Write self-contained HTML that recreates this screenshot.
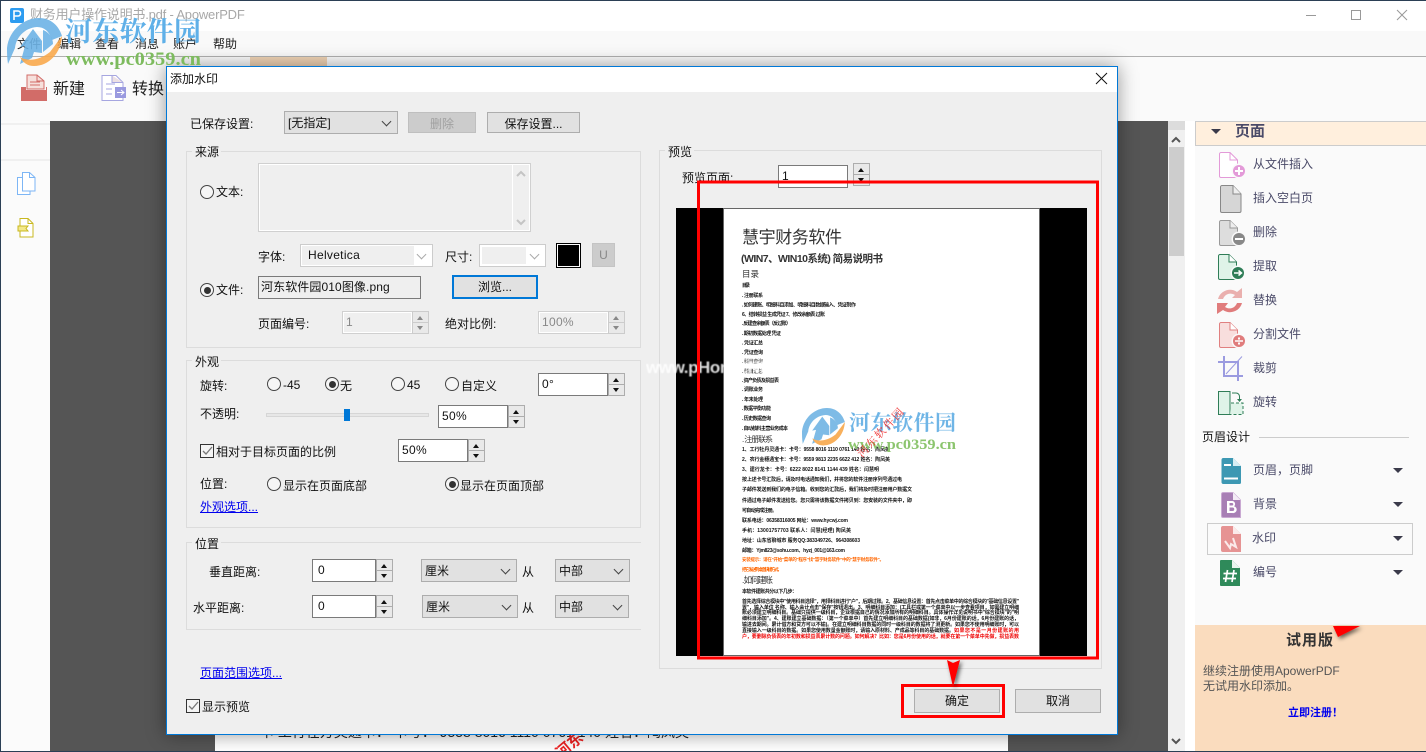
<!DOCTYPE html>
<html lang="zh-CN"><head><meta charset="utf-8"><title>ApowerPDF</title>
<style>
html,body{margin:0;padding:0}
body{width:1426px;height:752px;position:relative;overflow:hidden;background:#fafafa;font:12px/14px "Liberation Sans","WenQuanYi Zen Hei","Noto Sans CJK SC",sans-serif;color:#111}
div,span,a,svg{position:absolute}
.t{white-space:nowrap;height:14px;margin-top:1px}
.m{color:#222}
.s{color:#4a4a68}
.b{background:#e1e1e1;border:1px solid #adadad;box-sizing:border-box;text-align:center}
.g{border:1px solid #dcdcdc;box-sizing:border-box}
.l{background:#efefef;padding:0 2px 0 3px;height:14px;white-space:nowrap}
.i{background:#fff;border:1px solid #7a7a7a;box-sizing:border-box;padding:3px 0 0 3px;font-size:12px;height:23px;width:70px;letter-spacing:.3px}
.d{background:#efefef;border:1px solid #d0d0d0;border-right:0;box-shadow:inset 0 0 0 1px #fff;color:#888}
.sp{background:#e9e9e9;border:1px solid #adadad;box-sizing:border-box;width:17px;height:23px}
.sp:before,.sp:after{content:"";position:absolute;left:4px;border-left:3.5px solid transparent;border-right:3.5px solid transparent}
.sp:before{top:4px;border-bottom:4px solid #111}
.sp:after{bottom:3px;border-top:4px solid #111}
.sp i{position:absolute;left:0;right:0;top:10px;height:1px;background:#adadad}
.sd{border-color:#ccc}.sd:before{border-bottom-color:#888}.sd:after{border-top-color:#888}
.c{background:#e1e1e1;border:1px solid #adadad;box-sizing:border-box;height:23px;padding:4px 0 0 3px}
.c:after{content:"";position:absolute;right:7px;top:6px;width:6px;height:6px;border-right:1px solid #444;border-bottom:1px solid #444;transform:rotate(45deg)}
.cd{background:#fff;border-color:#ccc}.cd:after{border-color:#aaa}
.r{width:14px;height:14px;box-sizing:border-box;border:1px solid #444;border-radius:50%;background:#f6f6f6}
.on:after{content:"";position:absolute;left:2.5px;top:2.5px;width:7px;height:7px;border-radius:50%;background:#333}
.k{width:14px;height:14px;box-sizing:border-box;border:1px solid #333;background:#f4f4f4}
a.t{color:#0000ee;text-decoration:underline}
.ar{width:0;height:0;border-left:5px solid transparent;border-right:5px solid transparent;border-top:5px solid #3a3a4a}
</style></head><body>

<!-- window -->
<div style="left:0;top:0;width:1426px;height:31px;background:#fff"></div>
<div style="left:0;top:31px;width:1426px;height:25px;background:#f9f9f9"></div>
<div style="left:0;top:56px;width:1426px;height:1px;background:#b0b0b0"></div>
<div style="left:250px;top:57px;width:77px;height:9px;background:#f0d3b4"></div>
<div style="left:0;top:121px;width:50px;height:631px;background:#fbfbfb"></div>
<div style="left:0;top:123px;width:50px;height:2px;background:#f0f0f0"></div>
<div style="left:0;top:159px;width:50px;height:2px;background:#f0f0f0"></div>
<div style="left:50px;top:121px;width:1118px;height:631px;background:#555"></div>
<div style="left:1168px;top:121px;width:17px;height:631px;background:#f0f0f0"></div>
<div style="left:1168px;top:121px;width:17px;height:9px;background:#dcdcdc"></div>
<div style="left:1169px;top:147px;width:15px;height:109px;background:#cdcdcd"></div>
<div style="left:1185px;top:121px;width:10px;height:631px;background:#fff"></div>
<div style="left:1195px;top:121px;width:231px;height:504px;background:#fafafa"></div>
<div style="left:1195px;top:121px;width:231px;height:25px;box-sizing:border-box;background:#ffefdd;border:1px solid #ccc;border-right:0"></div>
<div style="left:1195px;top:625px;width:231px;height:127px;background:#fadcbe"></div>
<!-- bottom page peek -->
<div style="left:215px;top:700px;width:793px;height:52px;background:#fff;overflow:hidden">
  <div class="t" style="left:45px;top:23px;font-size:14px;line-height:16px;height:16px;color:#222">卡 工行在方灵通卡： 卡号： 9558 8016 1110 0761 140 姓名：陶凤英</div>
  <div class="t" style="left:340px;top:38px;font-size:15px;color:#e22;transform:rotate(-40deg);font-weight:bold">河东</div>
</div>

<div class="t" style="left:30px;top:7px;font-size:13px;color:#a8a8a8;letter-spacing:-.2px">财务用户操作说明书.pdf - ApowerPDF</div>
<div class="t m" style="left:17px;top:36px">文件</div>
<div class="t m" style="left:57px;top:36px">编辑</div>
<div class="t m" style="left:95px;top:36px">查看</div>
<div class="t m" style="left:135px;top:36px">消息</div>
<div class="t m" style="left:173px;top:36px">账户</div>
<div class="t m" style="left:213px;top:36px">帮助</div>
<div class="t m" style="left:53px;top:81px;font-size:16px;line-height:16px;height:16px">新建</div>
<div class="t m" style="left:132px;top:81px;font-size:16px;line-height:16px;height:16px">转换</div>

<!-- sidebar text -->
<div class="t" style="left:1235px;top:123px;font-size:15px;line-height:16px;font-weight:bold;color:#4a4a68">页面</div>
<div class="t s" style="left:1253px;top:156px">从文件插入</div>
<div class="t s" style="left:1253px;top:190px">插入空白页</div>
<div class="t s" style="left:1253px;top:224px">删除</div>
<div class="t s" style="left:1253px;top:258px">提取</div>
<div class="t s" style="left:1253px;top:292px">替换</div>
<div class="t s" style="left:1253px;top:326px">分割文件</div>
<div class="t s" style="left:1253px;top:360px">裁剪</div>
<div class="t s" style="left:1253px;top:394px">旋转</div>
<div class="t" style="left:1202px;top:429px">页眉设计</div>
<div style="left:1259px;top:437px;width:150px;height:1px;background:#ccc"></div>
<div class="t s" style="left:1253px;top:462px">页眉，页脚</div>
<div class="t s" style="left:1253px;top:496px">背景</div>
<div style="left:1207px;top:523px;width:206px;height:32px;box-sizing:border-box;border:1px solid #ccc"></div>
<div class="t s" style="left:1252px;top:530px">水印</div>
<div class="t s" style="left:1253px;top:564px">编号</div>
<div class="ar" style="left:1393px;top:468px"></div>
<div class="ar" style="left:1393px;top:502px"></div>
<div class="ar" style="left:1393px;top:536px"></div>
<div class="ar" style="left:1393px;top:570px"></div>
<div class="ar" style="left:1211px;top:129px"></div>
<div class="t" style="left:1286px;top:632px;font-size:15px;line-height:16px;font-weight:bold;color:#333;letter-spacing:1px">试用版</div>
<div class="t" style="left:1203px;top:663px;color:#555">继续注册使用ApowerPDF</div>
<div class="t" style="left:1203px;top:678px;color:#555">无试用水印添加。</div>
<div class="t" style="left:1288px;top:705px;font-size:11px;font-weight:bold;color:#0000ee">立即注册！</div>

<!-- app icons -->
<svg style="left:0;top:0" width="1426" height="752" viewBox="0 0 1426 752">
<path d="M1306 15.5h10" stroke="#999" fill="none"/>
<rect x="1351.5" y="10.5" width="9" height="9" fill="none" stroke="#999"/>
<path d="M1397 10l10 10M1407 10l-10 10" stroke="#999" fill="none"/>
<path d="M1172 142l4-4 4 4M1172 739l4 4 4-4" stroke="#555" stroke-width="2" fill="none"/>
<!-- P -->
<rect x="10" y="8" width="14" height="15" rx="2" fill="#2d9cf0"/>
<path d="M14 20V11h4a2.4 2.4 0 010 5h-4" stroke="#fff" stroke-width="1.6" fill="none"/>
<!-- new -->
<path d="M27 75h10l7 6v8H27z" fill="#f6e0dc" stroke="#d26c68"/>
<path d="M37 75v6h7M30 82h10M30 85h10" fill="none" stroke="#d26c68"/>
<path d="M21 87h5v3h20v-3h1v14H21z" fill="#d26c68"/>
<!-- convert -->
<path d="M102 75.500h14l7 7v18h-21z" fill="#fff" stroke="#a6a6e0"/>
<path d="M112 75.500v7h11" fill="#ece0e4" stroke="#a6a6e0"/>
<path d="M106 84h9M106 89h6M106 94h6" stroke="#a6a6e0"/>
<rect x="115" y="87" width="11" height="11" fill="#9a9adf"/>
<path d="M117 92.500h7M121 90l3 2.500-3 2.500" stroke="#fff" fill="none"/>
<!-- left icons -->
<path d="M17.500 177.500H30V194.500H17.500z" fill="#fff" stroke="#7db6f5"/>
<path d="M22.500 172.500h7l5.500 5V191H22.500z" fill="#fff" stroke="#7db6f5"/>
<path d="M29.500 172.500v5h5.500" fill="none" stroke="#7db6f5"/>
<path d="M20 218.500h8l5 5V237H20z" fill="#fff" stroke="#c8b820"/>
<path d="M28 218.500v5h5" fill="none" stroke="#c8b820"/>
<path d="M18 226h10l-2 2.500 2 2.500H18z" fill="#f3e88a" stroke="#c8b820"/>
<!-- side icons -->
<g transform="translate(1219,152)"><path d="M.5 2A1.500 1.500 0 012 .5H11L18.500 8V25.500H2A1.500 1.500 0 01.500 24z" fill="#fff" stroke="#e39ad8"/><path d="M11 .5V8H18.500" fill="none" stroke="#e39ad8"/><circle cx="20" cy="19" r="7.500" fill="#fafafa"/><circle cx="20" cy="19" r="6" fill="#e39ad8"/><path d="M20 15v8M16 19h8" stroke="#fff" stroke-width="2"/></g>
<g transform="translate(1220,185)"><path d="M.5 2A1.500 1.500 0 012 .5H13L21 9V26A1.500 1.500 0 0119.500 27.500H2A1.500 1.500 0 01.500 26z" fill="#d6d6d6" stroke="#888"/><path d="M13 .5V9H21" fill="#eee" stroke="#888"/></g>
<g transform="translate(1219,220)"><path d="M.5 2A1.500 1.500 0 012 .5H11L18.500 8V25.500H2A1.500 1.500 0 01.500 24z" fill="#ddd" stroke="#999"/><path d="M11 .5V8H18.500" fill="#eee" stroke="#999"/><circle cx="20" cy="19" r="7.500" fill="#fafafa"/><circle cx="20" cy="19" r="6" fill="#888"/><path d="M16 19h8" stroke="#fff" stroke-width="2"/></g>
<g transform="translate(1218,254)"><path d="M.5 2A1.500 1.500 0 012 .5H11L18.500 8V25.500H2A1.500 1.500 0 01.500 24z" fill="#dff3e8" stroke="#2f7d57"/><path d="M11 .5V8H18.500" fill="#fff" stroke="#2f7d57"/><circle cx="20" cy="19" r="7.500" fill="#fafafa"/><circle cx="20" cy="19" r="6" fill="#2f7d57"/><path d="M16 19h7M20.500 16.500L23.500 19l-3 2.500" stroke="#fff" stroke-width="1.500" fill="none"/></g>
<g transform="translate(1217,288)"><path d="M1 11C3 3 13-1 20 4L25 0V10H15l3-3C13 4 8 6 6 11z" fill="#eab0ae"/><path d="M25 15C23 23 13 27 6 22L0 26V15H11L8 19C13 22 18 20 20 15z" fill="#e07c7c"/></g>
<g transform="translate(1219,322)"><path d="M.5 2A1.500 1.500 0 012 .5H11L18.500 8V25.500H2A1.500 1.500 0 01.500 24z" fill="#f8dedd" stroke="#e08080"/><path d="M11 .5V8H18.500" fill="#fff" stroke="#e08080"/><circle cx="20" cy="19" r="7.500" fill="#fafafa"/><circle cx="20" cy="19" r="6" fill="#e07c7c"/><path d="M16 19h8" stroke="#fff" stroke-width="1.500"/><path d="M19 15.500h2v2h-2zM19 20.500h2v2h-2z" fill="#fff"/></g>
<g transform="translate(1218,356)" fill="none" stroke="#9b9be0"><path d="M6 0V20H25M0 6H20V25" stroke-width="2"/><path d="M24 .5L8 18"/></g>
<g transform="translate(1218,391)" fill="none"><rect x=".5" y=".5" width="11.500" height="23" fill="#dff3e8" stroke="#2f7d57"/><path d="M13 12h12v11.500H12" fill="#dff3e8" stroke="#2f7d57" stroke-dasharray="3 2"/><path d="M14 2h4a3.500 3.500 0 013.500 3.500V10" stroke="#2f7d57"/><path d="M19 8h5l-2.500 3z" fill="#2f7d57"/></g>
<g transform="translate(1221,458)"><path d="M2 0H12L20 8V24.500A1.500 1.500 0 0118.500 26H2A2 2 0 01.500 24V2A2 2 0 012 0z" fill="#3d98b3"/><path d="M12 0V8H20z" fill="#d8eef4"/><path d="M3 7h7M3 20.500h14" stroke="#fff" stroke-width="2"/></g>
<g transform="translate(1221,492)"><path d="M.5 2A1.500 1.500 0 012 .5H12L19.500 8V25.500H2A1.500 1.500 0 01.500 24z" fill="#a87fb5" stroke="#c9a9d2"/><path d="M12 .5V8H19.500z" fill="#f4ecf6"/><path d="M6 9h5a3 3 0 012 5.300A3.300 3.300 0 0111.500 21H6zM8.500 11v2.500H11a1.200 1.200 0 000-2.500zM8.500 15.500V19H11.500a1.700 1.700 0 000-3.500z" fill="#fff" fill-rule="evenodd"/></g>
<g transform="translate(1221,526)"><path d="M0 2A2 2 0 012 0H12L20 8V26H2A2 2 0 010 24z" fill="#e69393"/><path d="M12 0V8H20z" fill="#fbeaea"/><path d="M4 15l5 7 1-4 5 3-3-9" fill="none" stroke="#fbeaea" stroke-width="2"/></g>
<g transform="translate(1220,560)"><path d="M0 1A1 1 0 011 0H12L20 8V26H1A1 1 0 010 25z" fill="#2f8a5a"/><path d="M12 0V8H20z" fill="#eaf6ef"/><path d="M7.500 10L5.500 22M14 10l-2 12M3.500 13.500H17M3 18.500H16" stroke="#fff" stroke-width="1.700" fill="none"/></g>
</svg>

<!-- dialog -->
<div style="left:166px;top:66px;width:952px;height:669px;box-sizing:border-box;border:1px solid #0078d7;background:#efefef;box-shadow:0 0 18px rgba(0,0,0,.4)"></div>
<div style="left:167px;top:67px;width:950px;height:25px;background:#fff"></div>
<div class="t" style="left:170px;top:71px">添加水印</div>
<svg style="left:1095px;top:72px" width="13" height="13"><path d="M1 1l11 11M12 1L1 12" stroke="#111" fill="none"/></svg>

<div class="t" style="left:190px;top:116px">已保存设置:</div>
<div class="c" style="left:284px;top:111px;width:114px">[无指定]</div>
<div class="b" style="left:408px;top:112px;width:68px;height:21px;background:#ccc;border-color:#bfbfbf;color:#a0a0a0;padding-top:4px">删除</div>
<div class="b" style="left:487px;top:112px;width:93px;height:21px;padding-top:4px">保存设置...</div>

<!-- 来源 -->
<div class="g" style="left:186px;top:151px;width:455px;height:197px"></div>
<div class="t l" style="left:192px;top:144px">来源</div>
<div style="left:258px;top:163px;width:273px;height:69px;box-sizing:border-box;border:1px solid #d0d0d0;box-shadow:inset 0 0 0 1px #fff"></div>
<div style="left:512px;top:164px;width:1px;height:67px;background:#fff"></div>
<svg style="left:514px;top:168px" width="14" height="60"><path d="M3 8l4-4 4 4M3 52l4 4 4-4" stroke="#c4c4c4" stroke-width="2" fill="none"/></svg>
<div class="r" style="left:200px;top:185px"></div>
<div class="t" style="left:216px;top:184px">文本:</div>
<div class="t" style="left:258px;top:249px">字体:</div>
<div class="c cd" style="left:300px;top:244px;width:133px"></div>
<div style="left:302px;top:246px;width:112px;height:19px;background:#efefef"></div>
<div class="t" style="left:308px;top:247px;letter-spacing:.3px">Helvetica</div>
<div class="t" style="left:445px;top:249px">尺寸:</div>
<div class="c cd" style="left:479px;top:244px;width:67px"></div>
<div style="left:482px;top:247px;width:44px;height:17px;background:#efefef"></div>
<div style="left:556px;top:243px;width:25px;height:25px;box-sizing:border-box;background:#000;border:1px solid #000;box-shadow:inset 0 0 0 1px #fff"></div>
<div class="b" style="left:592px;top:243px;width:23px;height:24px;background:#ccc;border-color:#c4c4c4;color:#888;padding-top:4px">U</div>
<div class="r on" style="left:200px;top:283px"></div>
<div class="t" style="left:216px;top:282px">文件:</div>
<div style="left:258px;top:276px;width:163px;height:23px;box-sizing:border-box;border:1px solid #7a7a7a;padding:3px 0 0 2px;white-space:nowrap;letter-spacing:.1px">河东软件园010图像.png</div>
<div class="b" style="left:452px;top:275px;width:86px;height:24px;border:2px solid #0078d7;padding-top:3px">浏览...</div>
<div class="t" style="left:258px;top:316px">页面编号:</div>
<div class="i d" style="left:342px;top:311px">1</div>
<div class="sp sd" style="left:412px;top:311px"><i style="background:#ccc"></i></div>
<div class="t" style="left:445px;top:316px">绝对比例:</div>
<div class="i d" style="left:538px;top:311px">100%</div>
<div class="sp sd" style="left:608px;top:311px;width:17px"><i style="background:#ccc"></i></div>

<!-- 外观 -->
<div class="g" style="left:186px;top:360px;width:455px;height:168px"></div>
<div class="t l" style="left:192px;top:354px">外观</div>
<div class="t" style="left:200px;top:378px">旋转:</div>
<div class="r" style="left:267px;top:377px"></div><div class="t" style="left:283px;top:377px">-45</div>
<div class="r on" style="left:325px;top:377px"></div><div class="t" style="left:340px;top:378px">无</div>
<div class="r" style="left:391px;top:377px"></div><div class="t" style="left:407px;top:377px">45</div>
<div class="r" style="left:445px;top:377px"></div><div class="t" style="left:461px;top:378px">自定义</div>
<div class="i" style="left:538px;top:373px">0°</div><div class="sp" style="left:608px;top:373px"><i></i></div>
<div class="t" style="left:200px;top:406px">不透明:</div>
<div style="left:266px;top:413px;width:163px;height:4px;box-sizing:border-box;background:#e7e7e7;border:1px solid #d6d6d6"></div>
<div style="left:344px;top:409px;width:6px;height:12px;background:#0078d7"></div>
<div class="i" style="left:438px;top:405px">50%</div><div class="sp" style="left:508px;top:405px"><i></i></div>
<div class="k" style="left:200px;top:444px"></div>
<svg style="left:200px;top:444px" width="14" height="14"><path d="M3 7l3 3 6-7" stroke="#777" stroke-width="1.300" fill="none"/></svg>
<div class="t" style="left:216px;top:444px">相对于目标页面的比例</div>
<div class="i" style="left:398px;top:439px">50%</div><div class="sp" style="left:468px;top:439px"><i></i></div>
<div class="t" style="left:200px;top:476px">位置:</div>
<div class="r" style="left:267px;top:477px"></div><div class="t" style="left:283px;top:478px">显示在页面底部</div>
<div class="r on" style="left:445px;top:477px"></div><div class="t" style="left:460px;top:478px">显示在页面顶部</div>
<a class="t" style="left:200px;top:499px">外观选项...</a>

<!-- 位置 -->
<div class="g" style="left:186px;top:542px;width:455px;height:88px;border-right:0"></div>
<div class="t l" style="left:192px;top:536px">位置</div>
<div class="t" style="left:209px;top:564px">垂直距离:</div>
<div class="i" style="left:312px;top:559px;width:64px;padding-left:5px">0</div><div class="sp" style="left:376px;top:559px"><i></i></div>
<div class="c" style="left:421px;top:559px;width:96px">厘米</div>
<div class="t" style="left:522px;top:564px">从</div>
<div class="c" style="left:555px;top:559px;width:75px">中部</div>
<div class="t" style="left:193px;top:600px">水平距离:</div>
<div class="i" style="left:312px;top:595px;width:64px;padding-left:5px">0</div><div class="sp" style="left:376px;top:595px"><i></i></div>
<div class="c" style="left:422px;top:595px;width:96px">厘米</div>
<div class="t" style="left:522px;top:600px">从</div>
<div class="c" style="left:555px;top:595px;width:74px">中部</div>
<a class="t" style="left:200px;top:665px">页面范围选项...</a>
<div class="k" style="left:186px;top:699px"></div>
<svg style="left:186px;top:699px" width="14" height="14"><path d="M3 7l3 3 6-7" stroke="#777" stroke-width="1.300" fill="none"/></svg>
<div class="t" style="left:202px;top:699px">显示预览</div>

<!-- 预览 -->
<div class="g" style="left:659px;top:150px;width:443px;height:519px"></div>
<div class="t l" style="left:665px;top:144px">预览</div>
<div class="t" style="left:682px;top:170px">预览页面:</div>
<div class="i" style="left:778px;top:165px">1</div>
<div class="sp" style="left:853px;top:163px;background:#e9e9e9"><i></i></div>

<svg style="left:646px;top:208px" width="460" height="448" viewBox="646 208 460 448" font-family="'Liberation Sans','Noto Sans CJK SC',sans-serif">
<rect x="676" y="208" width="411" height="448"/>
<rect x="723.500" y="208.500" width="316" height="447" fill="#fff" stroke="#666"/>
<text x="742" y="243" font-size="17" fill="#333" textLength="100">慧宇财务软件</text>
<text x="741" y="262" font-size="10.500" fill="#333" textLength="142" font-weight="bold">(WIN7、WIN10系统) 简易说明书</text>
<text x="742" y="277" font-size="8.500" fill="#333" textLength="17">目录</text>
<g font-size="5" font-weight="bold" fill="#111" style="filter:blur(.25px)">
<text x="742" y="287" textLength="8">目录</text>
<text x="742" y="297" textLength="21">. 注册联系</text>
<text x="742" y="306.500" textLength="114">. 如何建账、明细科目添加、明细科目数据输入、凭证制作</text>
<text x="742" y="316" textLength="83">6、结转损益 生成凭证 7、修改余额表 过账</text>
<text x="742" y="325" textLength="49">. 反建查余额表（反过账）</text>
<text x="742" y="335" textLength="39">. 期初数据处理 凭证</text>
<text x="742" y="344.500" textLength="21">. 凭证汇总</text>
<text x="742" y="354" textLength="21">. 凭证查询</text>
<text x="742" y="363" textLength="21" fill="#777">. 科目查询</text>
<text x="742" y="373" textLength="21" fill="#444">. 科目汇总</text>
<text x="742" y="382" textLength="37">. 资产负债及损益表</text>
<text x="742" y="391" textLength="21">. 调账业务</text>
<text x="742" y="401" textLength="21">. 年末处理</text>
<text x="742" y="410" textLength="29">. 数据平衡功能</text>
<text x="742" y="420" textLength="29">. 历史数据查询</text>
<text x="742" y="430" textLength="46">. 自动核料主营业务成本</text>
<text x="742" y="451" textLength="148">1、工行牡丹灵通卡：卡号：9558 8016 1110 0761 140 姓名：陶凤英</text>
<text x="742" y="461" textLength="148">2、农行金穗通宝卡：卡号：9559 9813 2235 6622 412 姓名：陶凤英</text>
<text x="742" y="471" textLength="137">3、建行龙卡：卡号：6222 8022 8141 1144 439 姓名：闫慧明</text>
<text x="742" y="481" textLength="160">按上述卡号汇款后，请及时电话通知我们，并将您的软件注册序列号通过电</text>
<text x="742" y="491" textLength="170">子邮件发送到我们的电子信箱。收到您的汇款后，我们将及时把注册用户数据文</text>
<text x="742" y="502" textLength="170">件通过电子邮件发送给您。您只需将该数据文件拷贝到：您安装的文件夹中，即</text>
<text x="742" y="512" textLength="35">可自动完成注册。</text>
<text x="742" y="522" textLength="106">联系电话：06358316005 网址：www.hycwj.com</text>
<text x="742" y="532" textLength="109">手机：13001757703 联系人：闫慧(经理) 陶凤英</text>
<text x="742" y="542" textLength="118">地址：山东省聊城市 服务QQ:383349726、964308603</text>
<text x="742" y="552" textLength="103">邮箱：Yjm823@sohu.com、hyzj_001@163.com</text>
<text x="742" y="561" textLength="142" fill="#f60" font-size="4.500">安装提示：请在"开始"菜单的"程序"找"慧宇财务软件"中的"慧宇财务软件"。</text>
<text x="742" y="571" textLength="40" fill="#f60" font-size="4.500">把它发送到桌面快捷方式。</text>
<text x="742" y="593" textLength="55">本软件建账共分以下几步：</text>
<text x="742" y="603" textLength="277">首先选择综合模块中"使用科目选择"，用择科目进行"户"，后期过账。2、基础信息设置：首先点击菜单中的综合模块的"基础信息设置"</text>
<text x="742" y="609" textLength="277">置"，输入单位 名称、输入会计点击"保存"按钮退出。3、明细科目添加：(工具栏或第一个菜单中以一步查看项目，如需建立明细</text>
<text x="742" y="614" textLength="277">账必须建立明细科目。基础只提供一级科目，企业根据自己的情况添加所有的明细科目。具体操作详见说明书中"综合模块"的"明</text>
<text x="742" y="620" textLength="277">细科目添加"。4、建账建立基础数据：（第一个菜单中）首先建立明细科目的基础数据(如非，6月份建账的话，6月份建账的话，</text>
<text x="742" y="626" textLength="277">输进去期间。累计借方和贷方可以不输)。在建立明细科目数据的同时一级科目的数据将了测更新。如果您不使用明细账时，可以</text>
<text x="742" y="632" textLength="212">直接输入一级科目的数据。如果您使用数量金额账时，请输入原材料、产成品等科目的基础数据。</text>
<text x="954" y="632" textLength="65" fill="#e00">如果您不是一月份建账的用</text>
<text x="742" y="638" textLength="277" fill="#e00">户，要删除负债表的年初数和损益表累计数的问题。如何解决？比如：您是6月份使用的话，就要在第一个菜单中先做，损益表数</text>
</g>
<text x="742" y="442" font-size="8" fill="#333" textLength="31">. 注册联系</text>
<text x="742" y="583" font-size="8.500" fill="#333" textLength="31">. 如何建账</text>
<text x="646" y="373" font-size="17" font-weight="bold" fill="#fff" opacity=".85" textLength="135" font-family="'Liberation Sans',sans-serif" style="filter:blur(.6px)">www.pHome.NET</text>
</svg>

<!-- overlays -->
<svg style="left:0;top:0" width="1426" height="752" viewBox="0 0 1426 752">
<defs><filter id="sh" x="-50%" y="-50%" width="200%" height="200%"><feDropShadow dx="2" dy="2" stdDeviation="2" flood-color="#000" flood-opacity=".6"/></filter></defs>
<g transform="translate(7,18)">
<path d="M0 30C2 12 17 0 32 0 44 0 52 8 55 18L45 22C42 13 37 9 30 9 17 10 9 20 8 30L1 46C0 40 0 35 0 30z" fill="#6db3e6" opacity=".9"/>
<path d="M26 11l9 12v12l-8-1-2 6-12 6 5-18-5 1z" fill="#6db3e6" opacity=".9"/>
<path d="M36 12c6 2 10 8 10 14l-10 8z" fill="#6db3e6" opacity=".9"/>
<path d="M13 39c8 5 20 3 30-5l12-16c-1 17-13 30-28 30-6 0-11-3-14-9z" fill="#f8a94c" opacity=".9"/>
</g>
<text x="65" y="41" font-family="'Liberation Serif','Noto Serif CJK SC',serif" font-size="27" font-weight="bold" fill="#5fb0e8" textLength="136">河东软件园</text>
<text x="66" y="65" font-family="'Liberation Serif',serif" font-size="19" font-weight="bold" fill="#7dbb5e" textLength="135" lengthAdjust="spacingAndGlyphs">www.pc0359.cn</text>
<g transform="translate(802,408) scale(.78)">
<path d="M0 30C2 12 17 0 32 0 44 0 52 8 55 18L45 22C42 13 37 9 30 9 17 10 9 20 8 30L1 46C0 40 0 35 0 30z" fill="#7ebbe6"/>
<path d="M26 11l9 12v12l-8-1-2 6-12 6 5-18-5 1z" fill="#7ebbe6"/>
<path d="M36 12c6 2 10 8 10 14l-10 8z" fill="#7ebbe6"/>
<path d="M13 39c8 5 20 3 30-5l12-16c-1 17-13 30-28 30-6 0-11-3-14-9z" fill="#f8b05c"/>
</g>
<text x="849" y="430" font-family="'Liberation Serif','Noto Serif CJK SC',serif" font-size="21" font-weight="bold" fill="#6fb5e6" textLength="107">河东软件园</text>
<text x="848" y="449" font-family="'Liberation Serif',serif" font-size="15" font-weight="bold" fill="#8cc56e" textLength="108" lengthAdjust="spacingAndGlyphs">www.pc0359.cn</text>
<text x="862" y="458" transform="rotate(-47 862 458)" font-family="'Noto Serif CJK SC',serif" font-size="11" fill="#e33" textLength="62">河东软件园</text>
<!-- red annotations -->
<rect x="698.500" y="182" width="399" height="476" fill="none" stroke="#f00" stroke-width="3"/>
<rect x="902.500" y="685.500" width="101" height="31" fill="none" stroke="#f00" stroke-width="3"/>
</svg>
<div class="b" style="left:914px;top:689px;width:86px;height:24px;padding-top:4px">确定</div>
<div class="b" style="left:1015px;top:689px;width:86px;height:24px;padding-top:4px">取消</div>
<svg style="left:0;top:0" width="1426" height="752" viewBox="0 0 1426 752">
<path d="M947 660l6 3 7-3-7 27z" fill="#f00" filter="url(#sh)"/>
<path d="M1333 626h27l-22 11z" fill="#f00" filter="url(#sh)"/>
</svg>
<!-- window frame -->
<div style="left:0;top:0;width:1426px;height:1px;background:#2b3f55"></div>
<div style="left:0;top:0;width:1px;height:752px;background:#2b3f55"></div>
<div style="left:0;top:751px;width:1426px;height:1px;background:#2b3f55"></div>
</body></html>
